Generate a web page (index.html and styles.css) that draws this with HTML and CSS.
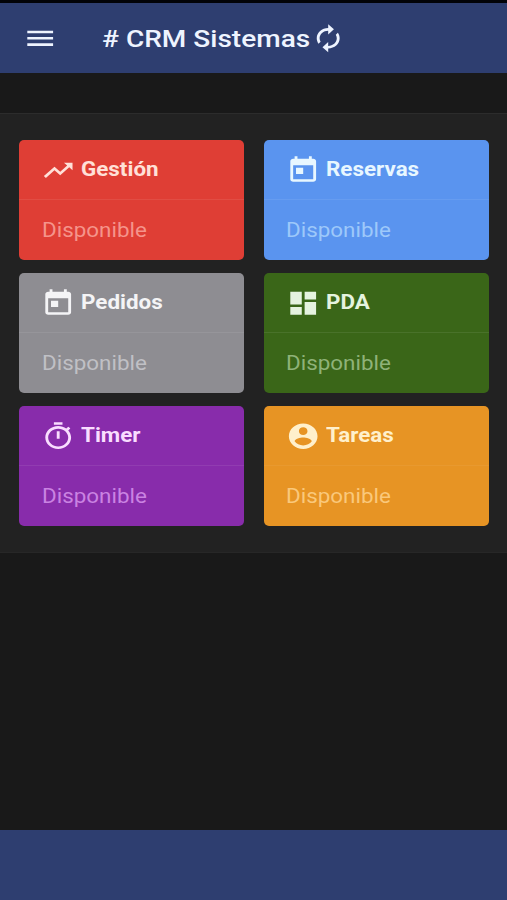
FILE: index.html
```html
<!DOCTYPE html>
<html lang="es">
<head>
<meta charset="utf-8">
<title>CRM Sistemas</title>
<link rel="stylesheet" href="styles.css">
</head>
<body>
<svg class="sprite" aria-hidden="true">
  <symbol id="today" viewBox="0 0 24 24" preserveAspectRatio="none"><path d="M19 3h-1V1h-2v2H8V1H6v2H5c-1.11 0-1.99.9-1.99 2L3 19c0 1.1.89 2 2 2h14c1.1 0 2-.9 2-2V5c0-1.1-.9-2-2-2zm0 16H5V8h14v11zM7 10h5v5H7z"/></symbol>
</svg>
<div class="app">
  <header class="toolbar">
    <svg class="icon" viewBox="0 0 24 24" preserveAspectRatio="none"><path d="M3 18h18v-2H3v2zm0-5h18v-2H3v2zm0-7v2h18V6H3z"/></svg>
    <h1 class="title"><span class="wide"># CRM Sistemas</span></h1>
    <svg class="icon refresh" viewBox="0 0 24 24" preserveAspectRatio="none"><path d="M12 6v3l4-4-4-4v3c-4.42 0-8 3.58-8 8 0 1.57.46 3.03 1.24 4.26L6.7 14.8c-.45-.83-.7-1.79-.7-2.8 0-3.31 2.69-6 6-6zm6.76 1.74L17.3 9.2c.44.84.7 1.79.7 2.8 0 3.31-2.69 6-6 6v-3l-4 4 4 4v-3c4.42 0 8-3.58 8-8 0-1.57-.46-3.03-1.24-4.26z"/></svg>
  </header>
  <main class="content">
    <section class="grid">
      <article class="card red">
        <div class="card-head"><svg class="icon" viewBox="0 0 24 24" preserveAspectRatio="none"><path d="M16 6l2.29 2.29-4.88 4.88-4-4L2 16.59 3.41 18l6-6 4 4 6.3-6.29L22 12V6z"/></svg><h2 class="name"><span class="wide">Gestión</span></h2></div>
        <p class="status"><span class="wide">Disponible</span></p>
      </article>
      <article class="card blue">
        <div class="card-head"><svg class="icon"><use href="#today"/></svg><h2 class="name"><span class="wide">Reservas</span></h2></div>
        <p class="status"><span class="wide">Disponible</span></p>
      </article>
      <article class="card gray">
        <div class="card-head"><svg class="icon"><use href="#today"/></svg><h2 class="name"><span class="wide">Pedidos</span></h2></div>
        <p class="status"><span class="wide">Disponible</span></p>
      </article>
      <article class="card green">
        <div class="card-head"><svg class="icon" viewBox="0 0 24 24" preserveAspectRatio="none"><path d="M3 13h8V3H3v10zm0 8h8v-6H3v6zm10 0h8V11h-8v10zm0-18v6h8V3h-8z"/></svg><h2 class="name"><span class="wide">PDA</span></h2></div>
        <p class="status"><span class="wide">Disponible</span></p>
      </article>
      <article class="card purple">
        <div class="card-head"><svg class="icon" viewBox="0 0 24 24" preserveAspectRatio="none"><path d="M15 1H9v2h6V1zm-4 13h2V8h-2v6zm8.03-6.61l1.42-1.42c-.43-.51-.9-.99-1.41-1.41l-1.42 1.42C16.07 4.74 14.12 4 12 4c-4.97 0-9 4.03-9 9s4.02 9 9 9 9-4.03 9-9c0-2.12-.74-4.07-1.97-5.61zM12 20c-3.87 0-7-3.13-7-7s3.13-7 7-7 7 3.13 7 7-3.13 7-7 7z"/></svg><h2 class="name"><span class="wide">Timer</span></h2></div>
        <p class="status"><span class="wide">Disponible</span></p>
      </article>
      <article class="card orange">
        <div class="card-head"><svg class="icon" viewBox="0 0 24 24" preserveAspectRatio="none"><path d="M12 2C6.48 2 2 6.48 2 12s4.48 10 10 10 10-4.48 10-10S17.52 2 12 2zm0 3c1.66 0 3 1.34 3 3s-1.34 3-3 3-3-1.34-3-3 1.34-3 3-3zm0 14.2c-2.5 0-4.71-1.28-6-3.22.03-1.99 4-3.08 6-3.08 1.99 0 5.97 1.09 6 3.08-1.29 1.94-3.5 3.22-6 3.22z"/></svg><h2 class="name"><span class="wide">Tareas</span></h2></div>
        <p class="status"><span class="wide">Disponible</span></p>
      </article>
    </section>
  </main>
  <footer class="footer"></footer>
</div>
</body>
</html>
```

FILE: styles.css
```css
* { box-sizing: border-box; }

body {
  margin: 0;
  background: #191919;
  font-family: Roboto, "Liberation Sans", sans-serif;
}

h1, h2, p { margin: 0; }

.sprite { display: none; }

.app {
  display: flex;
  flex-direction: column;
  height: 900px;
  overflow: hidden;
  border-top: 3px solid #020308;
}

.toolbar {
  display: flex;
  align-items: center;
  flex: none;
  height: 70px;
  padding-left: 23px;
  background: #2e3e70;
  color: #eef4ff;
}

.icon {
  flex: none;
  width: 34.4px;
  height: 30.5px;
  fill: currentColor;
}

.wide {
  display: inline-block;
  transform: scaleX(1.12);
  transform-origin: left center;
  white-space: nowrap;
}

.title {
  width: 208px;
  margin: 2px 0 0 45px;
  font-size: 24.6px;
  font-weight: 500;
  line-height: 30px;
}

.title .wide { transform: scaleX(1.14); }

.refresh { margin-left: 1px; }

.content {
  flex: 1;
  padding-top: 40px;
}

.grid {
  display: grid;
  grid-template-columns: 225px 225px;
  grid-auto-rows: 120.5px;
  gap: 12.5px 19.5px;
  height: 440px;
  padding: 25.5px 19px 0;
  border-top: 1px solid #2c2c2c;
  border-bottom: 1px solid #272727;
  background: #222;
}

.card {
  border-radius: 5px;
  overflow: hidden;
}

.card-head {
  display: flex;
  align-items: center;
  height: 60px;
  padding: 2.5px 0 0 22px;
  border-bottom: 1px solid rgba(255, 255, 255, .08);
}

.name {
  margin: -2.5px 0 0 5.7px;
  font-size: 20px;
  font-weight: 700;
  line-height: 24px;
}

.status {
  padding: 18px 0 0 22.7px;
  font-size: 20px;
  line-height: 24px;
}

.red { background: #df3e35; color: #ffe0d8; }
.red .status { color: #f5948b; }
.blue { background: #5a94ef; color: #e8f7ff; }
.blue .status { color: #9dc8fa; }
.gray { background: #8e8d92; color: #f4f4f6; }
.gray .status { color: #c0c0c5; }
.green { background: #3a6618; color: #e5f3df; }
.green .status { color: #8fb278; }
.purple { background: #882cab; color: #f9ddff; }
.purple .status { color: #ca83e2; }
.orange { background: #e79424; color: #fff0cc; }
.orange .status { color: #fac87b; }
.orange .card-head { border-bottom-color: rgba(255, 255, 255, .05); }

.footer {
  flex: none;
  height: 70px;
  background: #2e3e70;
}
```
